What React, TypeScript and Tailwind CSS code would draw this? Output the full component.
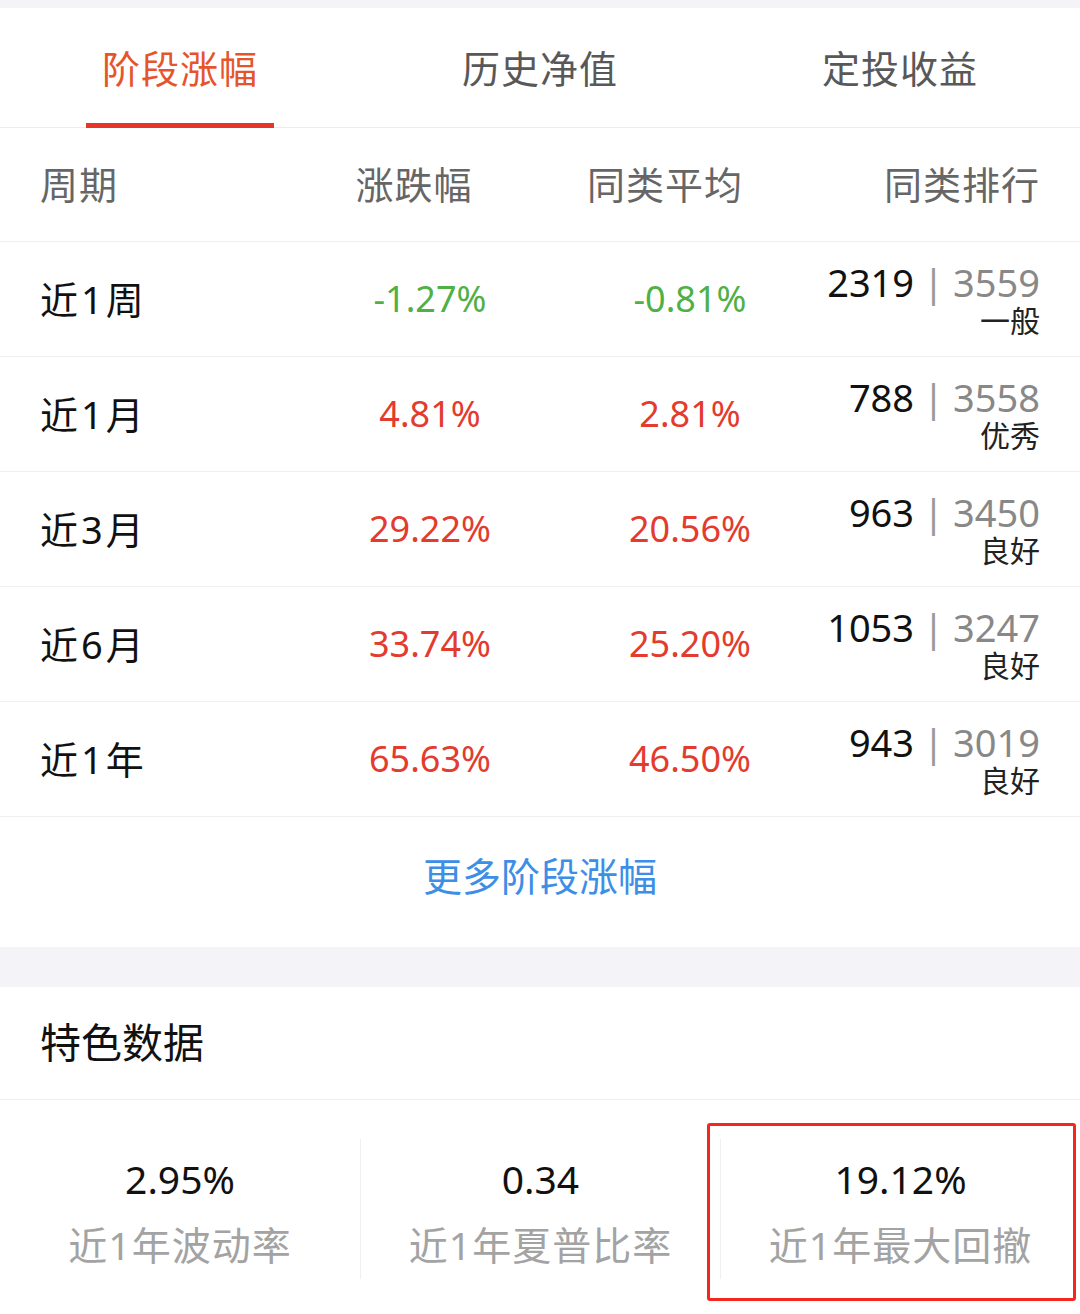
import React from "react";

const rows = [
  { label: "近1周", chg: "-1.27%", avg: "-0.81%", rank: "2319", total: "3559", level: "一般" },
  { label: "近1月", chg: "4.81%", avg: "2.81%", rank: "788", total: "3558", level: "优秀" },
  { label: "近3月", chg: "29.22%", avg: "20.56%", rank: "963", total: "3450", level: "良好" },
  { label: "近6月", chg: "33.74%", avg: "25.20%", rank: "1053", total: "3247", level: "良好" },
  { label: "近1年", chg: "65.63%", avg: "46.50%", rank: "943", total: "3019", level: "良好" },
];

const stats = [
  { value: "2.95%", label: "近1年波动率" },
  { value: "0.34", label: "近1年夏普比率" },
  { value: "19.12%", label: "近1年最大回撤" },
];

const tabs = ["阶段涨幅", "历史净值", "定投收益"];

const pctColor = (v: string) => (v.startsWith("-") ? "text-[#4fb045]" : "text-[#e33b2e]");

export default function App() {
  return (
    <div
      className="w-[1080px] bg-white"
      style={{ fontFamily: '"Noto Sans", "Noto Sans CJK SC", sans-serif' }}
    >
      <div className="h-2 bg-[#f4f4f8]" />

      <div className="flex h-[120px] border-b border-[#ededed]">
        {tabs.map((t, i) => (
          <div key={t} className="relative flex flex-1 items-center justify-center">
            <span className={`text-[38px] leading-none tracking-[1px] ${i === 0 ? "text-[#e5552c]" : "text-[#585858]"}`}>{t}</span>
            {i === 0 && (
              <div className="absolute bottom-[-1px] left-1/2 h-[5px] w-[188px] -translate-x-1/2 bg-[#e8352a]" />
            )}
          </div>
        ))}
      </div>

      <div className="grid h-[114px] grid-cols-[300px_260px_260px_1fr] items-center border-b border-[#efefef] text-[38px] tracking-[1px] text-[#666]">
        <span className="pl-10">周期</span>
        <span className="pr-[32px] text-center">涨跌幅</span>
        <span className="pr-[50px] text-center">同类平均</span>
        <span className="pr-10 text-right">同类排行</span>
      </div>

      {rows.map((r) => (
        <div
          key={r.label}
          className="grid h-[115px] grid-cols-[300px_260px_260px_1fr] items-center border-b border-[#efefef]"
        >
          <span className="pl-10 text-[38px] tracking-[3px] text-[#111]">{r.label}</span>
          <span className={`text-center text-[36px] ${pctColor(r.chg)}`}>{r.chg}</span>
          <span className={`text-center text-[36px] ${pctColor(r.avg)}`}>{r.avg}</span>
          <div className="flex flex-col items-end pr-10 pt-1">
            <div className="flex h-[40px] items-center text-[38px] leading-[40px]">
              <span className="text-[#111]">{r.rank}</span>
              <span className="mx-[9px] text-[#999]">|</span>
              <span className="text-[#888]">{r.total}</span>
            </div>
            <div className="flex h-[38px] items-center text-[30px] leading-[38px] text-[#222]">
              <span>{r.level}</span>
            </div>
          </div>
        </div>
      ))}

      <div className="flex h-[130px] justify-center pt-[38px]">
        <span className="text-[39px] leading-[42px] text-[#3c8ee6]">更多阶段涨幅</span>
      </div>

      <div className="h-10 bg-[#f4f4f8]" />

      <div className="flex h-[113px] items-center border-b border-[#efefef] pl-10">
        <span className="text-[41px] text-[#111]">特色数据</span>
      </div>

      <div className="relative grid grid-cols-3 pb-[36px] pt-[39px]">
        {stats.map((s, i) => (
          <div
            key={s.label}
            className={`flex h-[140px] flex-col items-center ${i > 0 ? "border-l border-[#f0f0f0]" : ""}`}
          >
            <span className="mt-[18px] text-[39px] leading-[44px] text-[#111]">{s.value}</span>
            <span className="mt-[22px] text-[39px] leading-[44px] tracking-[1px] text-[#a3a3a3]">{s.label}</span>
          </div>
        ))}
        <div className="absolute left-[707px] top-[23px] h-[178px] w-[369px] rounded-[3px] border-[3px] border-[#f5261b]" />
      </div>
    </div>
  );
}
